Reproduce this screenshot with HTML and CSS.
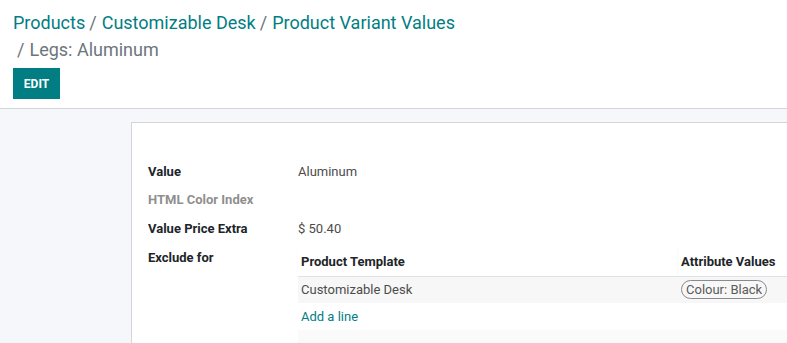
FILE: index.html
```html
<!DOCTYPE html>
<html lang="en">
<head>
    <meta charset="UTF-8">
    <title>Legs: Aluminum</title>
    <link rel="stylesheet" href="styles.css">
</head>
<body>
    <!-- Control panel -->
    <div class="control-panel">
        <ol class="breadcrumb">
            <li><a href="#">Products</a></li>
            <li><a href="#">Customizable Desk</a></li>
            <li><a href="#">Product Variant Values</a></li>
            <li class="active">Legs: Aluminum</li>
        </ol>
        <div class="buttons">
            <button class="btn-primary">EDIT</button>
        </div>
    </div>

    <!-- Form view -->
    <div class="form-view">
        <div class="sheet">
            <div class="group">
                <div class="label">Value</div>
                <div class="field">Aluminum</div>

                <div class="label muted">HTML Color Index</div>
                <div class="field"></div>

                <div class="label">Value Price Extra</div>
                <div class="field">$ 50.40</div>

                <div class="label">Exclude for</div>
                <div class="field">
                    <table class="list">
                        <thead>
                            <tr>
                                <th class="col-template">Product Template</th>
                                <th>Attribute Values</th>
                            </tr>
                        </thead>
                        <tbody>
                            <tr class="row-odd">
                                <td>Customizable Desk</td>
                                <td><span class="badge">Colour: Black</span></td>
                            </tr>
                            <tr>
                                <td colspan="2"><a href="#">Add a line</a></td>
                            </tr>
                            <tr class="row-odd row-empty">
                                <td colspan="2"></td>
                            </tr>
                        </tbody>
                    </table>
                </div>
            </div>
        </div>
    </div>
</body>
</html>
```

FILE: styles.css
```css
/* General */
* {
    margin: 0;
    padding: 0;
    box-sizing: border-box;
}

body {
    font-family: Roboto, 'Noto Sans', sans-serif;
    font-size: 13px;
    color: #4c4c4c;
    background: #f6f7fa;
    height: 100vh;
    overflow: hidden;
}

a {
    color: #017e84;
    text-decoration: none;
}

/* Control panel */
.control-panel {
    background: #fff;
    border-bottom: 1px solid #d3d5da;
    padding: 9px 13px 9px;
}

.breadcrumb {
    list-style: none;
    display: flex;
    flex-wrap: wrap;
    font-size: 18px;
    line-height: 27px;
    max-width: 460px;
}

.breadcrumb li + li::before {
    content: "/";
    color: #6c757d;
    padding: 0 5px 0 4px;
}

.breadcrumb li.active {
    color: #6c757d;
}

.breadcrumb li.active::before {
    padding-left: 4px;
}

.buttons {
    margin-top: 5px;
}

.btn-primary {
    background: #017e84;
    color: #fff;
    border: none;
    font-family: Roboto, sans-serif;
    font-size: 12px;
    font-weight: 700;
    width: 47px;
    height: 31px;
    cursor: pointer;
}

/* Form sheet */
.form-view {
    padding: 13px 0 0 131px;
}

.sheet {
    background: #fff;
    border: 1px solid #d3d5da;
    border-right: none;
    padding: 35px 0 0 16px;
    min-height: 240px;
}

.group {
    display: grid;
    grid-template-columns: 150px 1fr;
    grid-auto-rows: minmax(28px, auto);
    align-items: start;
}

.label,
.field {
    line-height: 20px;
    padding-top: 4px;
}

.label {
    font-weight: 700;
    color: #212529;
}

.label.muted {
    color: #8f8f8f;
}

.group .label:nth-child(5),
.group .field:nth-child(6) {
    padding-top: 5px;
    min-height: 30px;
}

/* One2many list */
.list {
    width: 100%;
    border-collapse: collapse;
}

.list th {
    text-align: left;
    font-weight: 700;
    color: #212529;
    height: 28px;
    padding: 0 3px;
    border-bottom: 1px solid #dee2e6;
    box-shadow: 0 1px 2px rgba(0, 0, 0, 0.05);
}

.list .col-template {
    width: 380px;
}

.list td {
    height: 27px;
    padding: 0 3px;
}

.list .row-odd td {
    background: #f7f7f7;
}

.list .row-empty td {
    background: #fafafa;
    height: 20px;
}

.badge {
    display: inline-block;
    border: 1px solid #8a8a8a;
    border-radius: 10px;
    padding: 0 4px;
    line-height: 17px;
    color: #5a5a5a;
}
```
